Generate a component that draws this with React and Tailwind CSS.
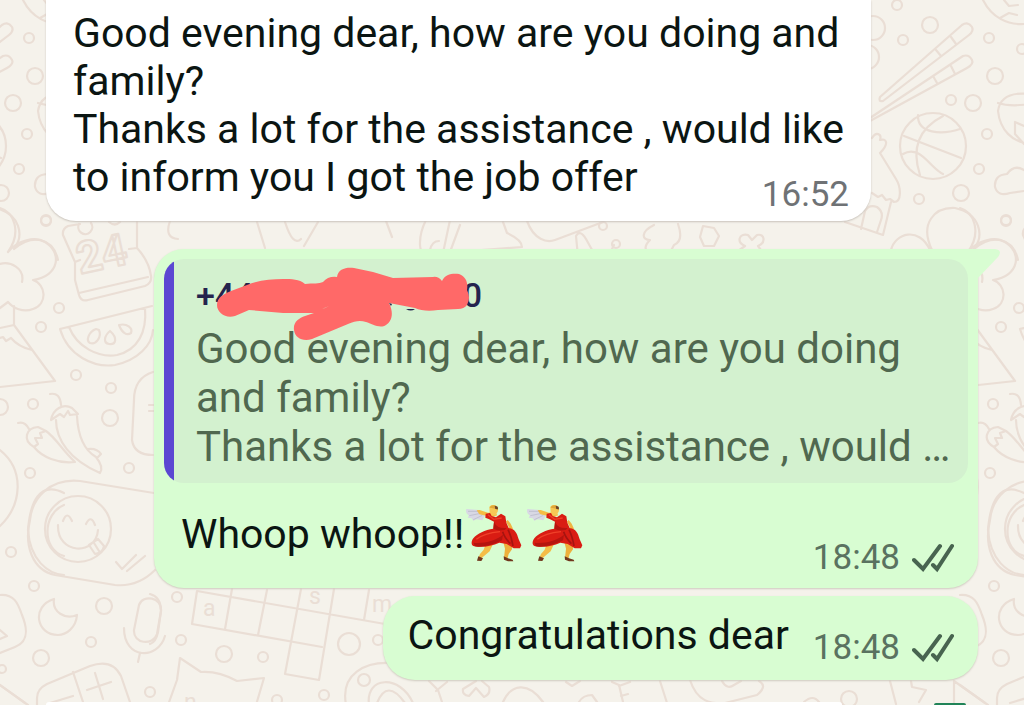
import React from "react";

const DOTS = [
  [46, 221, 5], [59, 308, 5], [41, 327, 5], [76, 375, 5], [111, 388, 5], [110, 418, 8], [33, 404, 5], [0, 407, 8],
  [30, 473, 5], [129, 468, 5], [11, 552, 5], [34, 586, 5], [104, 606, 8], [91, 642, 5], [41, 658, 8], [150, 692, 5], [2, 669, 4],
  [897, 5, 5], [930, 25, 8], [903, 40, 5], [989, 38, 5], [995, 76, 8], [973, 103, 8], [951, 100, 5], [987, 134, 5],
  [979, 169, 5], [961, 193, 8], [919, 199, 5], [1006, 220, 5], [1022, 49, 5], [873, 28, 12], [867, 57, 12],
  [177, 597, 5], [181, 640, 5], [224, 654, 8], [263, 657, 5], [349, 644, 11], [378, 640, 5], [364, 680, 6], [324, 695, 5], [277, 700, 5],
  [603, 226, 4], [616, 244, 4], [849, 699, 8],
];

const STROKES = [
  // cloud and pizza slice
  "M0 208C14 212 22 232 8 252M8 252C18 240 35 236 45 242C62 252 60 276 33 280C46 284 48 304 33 309C23 313 13 308 8 302L0 308M0 264C10 261 25 268 22 282M14 306V325L55 381L0 387M0 328L14 325M32 350C23 348 16 344 11 338L6 341L3 337L0 338",
  // calendar
  "M80 224L68 226Q62 229 63 235L75 262V280L79 295Q81 302 88 300L145 286Q152 283 151 276Q149 261 137 248V222M79 293L148 277M75 262L80 260M129 249L137 248M79 224A7 7 0 1 0 91 223M109 222Q115 227 120 222",
  // melon
  "M60 329L152 306M60 329C68 356 94 368 115 365C138 360 152 345 153 330M69 327C77 347 98 358 117 355C138 350 147 332 145 308M96 329C88 332 86 341 90 343C96 345 102 337 99 330ZM110 331C104 336 103 343 109 344C116 345 118 338 110 331ZM119 325C122 333 127 336 131 333C133 328 127 323 119 325Z",
  // chillies
  "M50 394Q60 392 61 405M51 420C53 409 63 403 72 408L78 414L70 415L68 411L64 417L60 414ZM56 420C56 440 70 460 100 473Q104 467 96 457C84 450 78 436 77 416M18 423Q25 421 29 429M34 447C22 440 26 428 38 427L46 431L40 433L42 438L35 438L38 444ZM46 431C56 438 62 450 75 462C58 464 42 457 34 447M88 449Q97 448 101 454L97 458",
  // card edge
  "M153 372Q134 378 134 400L132 440Q134 455 153 455M149 405h5M149 411h5",
  // smiley tag
  "M0 450C25 470 22 505 0 526M160 494L80 481C50 478 32 498 30 520C24 545 32 570 55 575L115 585C135 587 147 578 155 570M63 521Q67 510 72 521M86 524Q91 514 95 525M58 525C57 555 96 556 98 530M89 545L98 539L104 546Q103 553 95 554ZM94 543l5 8M116 562L122 569L136 555M127 571L145 556",
  // moon, microphone, leaf, calculator
  "M54 599C52 612 65 620 77 615C76 628 66 635 58 635C36 635 31 606 54 599ZM139 605C143 594 162 597 161 611L157 634C153 646 133 644 134 630ZM124 628C124 660 158 660 165 636M140 653L138 662M0 595C14 594 18 603 22 615C29 632 27 642 15 647L0 653M0 630L7 636L0 639",
  "M37 705V698Q37 689 47 684L90 666Q112 658 121 676L131 705M73 672L83 702M87 690L111 682M95 673L103 699M50 703L73 696M0 685L25 703",
  // chopsticks
  "M880 97L962 25Q968 21 972 27Q974 31 969 35L883 101Q878 102 880 97ZM936 50L941 56M951 37L956 44M870 118L963 56Q969 54 972 60Q974 64 967 68L870 121M933 76L937 83M951 66L955 74",
  // basketball
  "M904 136L961 158M918 115C917 134 942 135 960 129M943 116C916 130 912 151 920 175M903 154C920 144 930 168 943 174",
  // football and bowl
  "M983 0C992 18 1008 25 1024 24M1000 18L1009 13L1017 15M1004 0L1009 6L1018 5M998 111C1000 97 1012 92 1030 94M998 103Q1010 107 1030 104M998 111C1000 130 1012 142 1030 144M1015 122V134L1024 144M1015 122L1024 126",
  // shoe, small cloud
  "M872 138C876 131 882 134 880 140C886 138 890 143 880 153L896 179C901 187 902 202 894 202L890 199L886 200L882 195L878 197L872 193M891 202L883 235L845 222M861 229L865 211Q869 204 877 207Q884 212 881 220L877 232M1024 170Q1014 164 1007 174Q994 175 995 187Q998 197 1010 193L1024 191",
  "M891 250C895 233 919 226 930 250M932 250C919 223 935 207 955 208C981 214 984 236 974 249M974 249C992 234 1013 237 1018 260",
  // objects above the reply
  "M426 220C417 238 418 262 430 250Q432 241 439 241M450 220L443 253L522 247Q522 240 507 233L503 222M460 225L450 252M527 221C534 240 547 243 555 240L603 222M612 249L614 245M578 257L576 236Q580 229 586 239L596 257M654 225C640 232 642 240 650 240C640 250 650 256 655 252M678 224Q684 241 674 245L666 260M703 226L714 228L719 236L714 246L704 246L700 237ZM738 251L745 246C736 242 739 233 748 235L752 240L757 235C765 233 766 243 758 246L766 257",
  "M170 221Q164 238 178 239M257 222L265 248M285 222Q293 247 301 239M318 222L304 246M386 221L392 237",
  // crossword
  "M197 591L385 624M192 624L322 647M197 591L192 624M232 589L225 629M267 590L258 635M301 589L285 674L319 680L334 589M369 590L364 620M150 594Q161 597 161 611L158 632Q156 642 150 644",
  // cat
  "M168 705L177 680L180 658L201 672C215 671 226 675 237 681L264 678L256 705",
  // camera and details under the last reply
  "M346 705C340 673 366 662 390 663M369 705C365 676 400 674 413 703M377 703Q387 678 405 703M429 681L438 690L442 702M436 691L447 682M476 681L463 689Q462 695 469 696L476 688L484 697Q491 694 489 687L482 681M503 702C511 684 528 681 543 702M566 682L572 686L580 681M579 702Q583 695 592 695L597 702M612 682L619 685L623 702M619 686L630 682M621 696L628 694M660 681L667 703M690 680C697 702 711 704 725 703L757 695Q768 686 759 681M722 681Q727 690 734 685L741 681M804 702Q813 694 819 702M890 681L896 704M911 681L912 687L926 690L919 702M954 681V705M954 681L988 705",
];

function Wallpaper() {
  return (
    <svg className="absolute inset-0 -z-10 h-full w-full" aria-hidden="true">
      <defs>
        <g id="doodles" fill="none" stroke="#eaded5" strokeWidth="2.2" strokeLinecap="round" strokeLinejoin="round">
          {STROKES.map((d) => (
            <path key={d} d={d} />
          ))}
          {DOTS.map(([x, y, r]) => (
            <circle key={`${x}-${y}`} cx={x} cy={y} r={r} />
          ))}
          <circle cx="78" cy="529" r="33" />
          <circle cx="933" cy="146" r="33" />
          <path d="M1024 493C998 480 990 505 988 530C990 560 1008 574 1024 575M1024 505C1002 514 1002 550 1024 556" />
          <text x="80" y="274" transform="rotate(-12 80 274)" fontSize="44" fontWeight="700" fontFamily="Roboto, sans-serif">24</text>
          <g fontSize="23" fontFamily="Roboto, sans-serif" fill="#eaded5" stroke="none">
            <text x="203" y="616">a</text>
            <text x="309" y="604">s</text>
            <text x="372" y="612">m</text>
            <text x="184" y="710">n</text>
          </g>
        </g>
      </defs>
      <use href="#doodles" x="-960" />
      <use href="#doodles" />
      <use href="#doodles" x="960" />
    </svg>
  );
}

function Ticks() {
  return (
    <svg width="42" height="30" viewBox="0 0 42 30" fill="none" stroke="#486450" strokeWidth="4" strokeLinecap="round" role="img" aria-label="Delivered">
      <path d="M2 17L11 26L28 3M21 22L25 26L40 3" />
    </svg>
  );
}

function Time({ children, sent }) {
  return (
    <span className={sent ? "flex shrink-0 items-center gap-3 text-[#5a7260]" : "shrink-0 text-[#6f7275]"}>
      <time className="text-[35px] leading-10">{children}</time>
      {sent && <Ticks />}
    </span>
  );
}

function Dancer() {
  return (
    <svg width="61" height="60" viewBox="11 24 183 180" role="img" aria-label="Dancing woman">
      <path d="M57 45L18 42C15 51 20 58 26 61L22 68L34 70L39 77L49 73L66 76L73 63Z" fill="#d8d8e4" />
      <path d="M57 49L23 49M61 55L27 62M66 61L39 74" stroke="#b5b4c5" strokeWidth="2" />
      <path d="M49 46L58 45L83 53L104 52L111 61L98 65L77 62L57 58Z" fill="#f4bd45" />
      <path d="M87 36C92 27 107 29 111 37L113 48L106 61L95 61L88 52Z" fill="#f7c856" />
      <path d="M88 38C92 28 107 29 112 38L113 46L104 41L94 39Z" fill="#e0a83a" />
      <path d="M103 32L112 35L113 43L105 42Z" fill="#69422a" />
      <path d="M142 75L151 86L158 101L150 106L143 91L137 80Z" fill="#efb542" />
      <path d="M77 145L99 145L88 169L65 188L53 192L59 177L70 164Z" fill="#f4bd47" />
      <path d="M128 137L154 138L155 163L145 177L141 192L131 188L134 161Z" fill="#eeb03c" />
      <path d="M54 184L68 190L63 198L50 197ZM130 184L143 190L157 194L159 199L143 199L131 194Z" fill="#71371d" />
      <path d="M76 56L89 54L94 63L107 67L122 56L135 64L138 83L145 99C164 101 170 115 175 133L183 151L179 160L160 160L139 147L117 143C95 154 62 158 43 154C31 153 32 139 39 130C51 115 74 105 99 101L101 80L85 72L75 68Z" fill="#d91c13" />
      <path d="M101 80Q110 102 139 99L133 105Q112 109 99 101ZM40 143C69 147 109 136 128 119L125 136C101 149 66 158 43 154Z" fill="#b5140f" />
      <path d="M143 104Q153 124 158 153M127 110Q132 127 150 146" fill="none" stroke="#a51410" strokeWidth="5" />
      <path d="M48 133C69 116 98 112 119 110M83 59L100 73L124 69" fill="none" stroke="#ef4129" strokeWidth="4" />
    </svg>
  );
}

function Scribble() {
  return (
    <svg className="absolute top-2 left-[50px]" width="260" height="78" viewBox="214 266 260 78" aria-hidden="true">
      <path
        d="M217 304C217 297 223 293 231 290L247 284C259 279 271 278 283 278C292 278 299 278 305 283C313 282 319 283 323 281Q328 275 337 276C338 268 346 266 354 267L373 271L393 277L433 276Q438 275 442 280C445 273 453 272 459 273C467 276 468 283 467 289Q471 297 467 304Q464 308 458 308L438 309Q424 311 415 307L389 302C394 312 392 320 386 324C380 328 372 323 366 321C360 319 355 320 348 323L312 338C303 341 295 337 294 329C293 321 299 317 305 315L314 312L283 312L249 309L235 315C226 318 217 312 217 304Z"
        fill="#ff6968"
      />
      <path d="M322 308L329 305L325 307Z" fill="#d3f1cf" />
      <path d="M389 302L392 303L391 305ZM406 308Q411 311 415 308Z" fill="#24234d" />
    </svg>
  );
}

export default function App() {
  return (
    <main className="relative isolate flex min-h-screen flex-col overflow-hidden bg-[#f5f2eb] px-[46px] font-['Roboto',sans-serif] text-[41px] leading-[48px] text-[#0b1512]">
      <Wallpaper />

      <article className="flex max-w-[825px] items-end self-start rounded-b-[30px] bg-white pt-[9px] pr-[22px] pb-5 pl-[27px] shadow-[0_1px_2px_#c9c3bb]">
        <p>
          Good evening dear, how are you doing and family?
          <br />
          Thanks a lot for the assistance , would like
          <br />
          to inform you I got the job offer
        </p>
        <div className="-mb-[15px] -ml-24">
          <Time>16:52</Time>
        </div>
      </article>

      <article className="relative mt-7 w-full max-w-[824px] self-end rounded-[30px] rounded-tr-none bg-[#d8fdd2] p-2.5 shadow-[0_1px_2px_#cfcabf]">
        <svg className="absolute top-0 left-full" width="24" height="30" viewBox="0 0 24 30" aria-hidden="true">
          <path d="M0 0H17Q25 1 20 8L0 29Z" fill="#d8fdd2" />
        </svg>
        <blockquote className="relative flex overflow-hidden rounded-[20px] bg-[#d3f1cf] text-[42px] leading-[49px] text-[#50684f]">
          <div className="w-2.5 shrink-0 bg-[#5b47d2]" />
          <div className="grow pt-[11px] pr-2 pb-3 pl-[22px]">
            <div className="mb-1 flex w-[286px] justify-between text-[34px] leading-[50px] font-medium text-[#24234d]">
              <span>+44</span>
              <span>0</span>
            </div>
            <p>
              Good evening dear, how are you doing and family?
              <br />
              Thanks a lot for the assistance , would …
            </p>
          </div>
          <Scribble />
        </blockquote>
        <div className="mt-5 flex items-end justify-between pr-3.5 pl-[17px]">
          <p className="flex h-[75px] items-start">
            <span className="pt-[7px]">Whoop whoop!!</span>
            <Dancer />
            <Dancer />
          </p>
          <Time sent>18:48</Time>
        </div>
      </article>

      <article className="mt-2 flex items-end gap-6 self-end rounded-[32px] bg-[#d8fdd2] pt-[15px] pr-6 pb-3 pl-[25px] shadow-[0_1px_2px_#cfcabf]">
        <p className="pb-[9px]">Congratulations dear</p>
        <Time sent>18:48</Time>
      </article>

      <footer className="mt-auto flex items-end justify-between">
        <div className="h-[3px] w-[796px] rounded-t-full bg-white" />
        <div className="mr-3 h-[2px] w-8 rounded-t-full bg-[#218458]" />
      </footer>
    </main>
  );
}
